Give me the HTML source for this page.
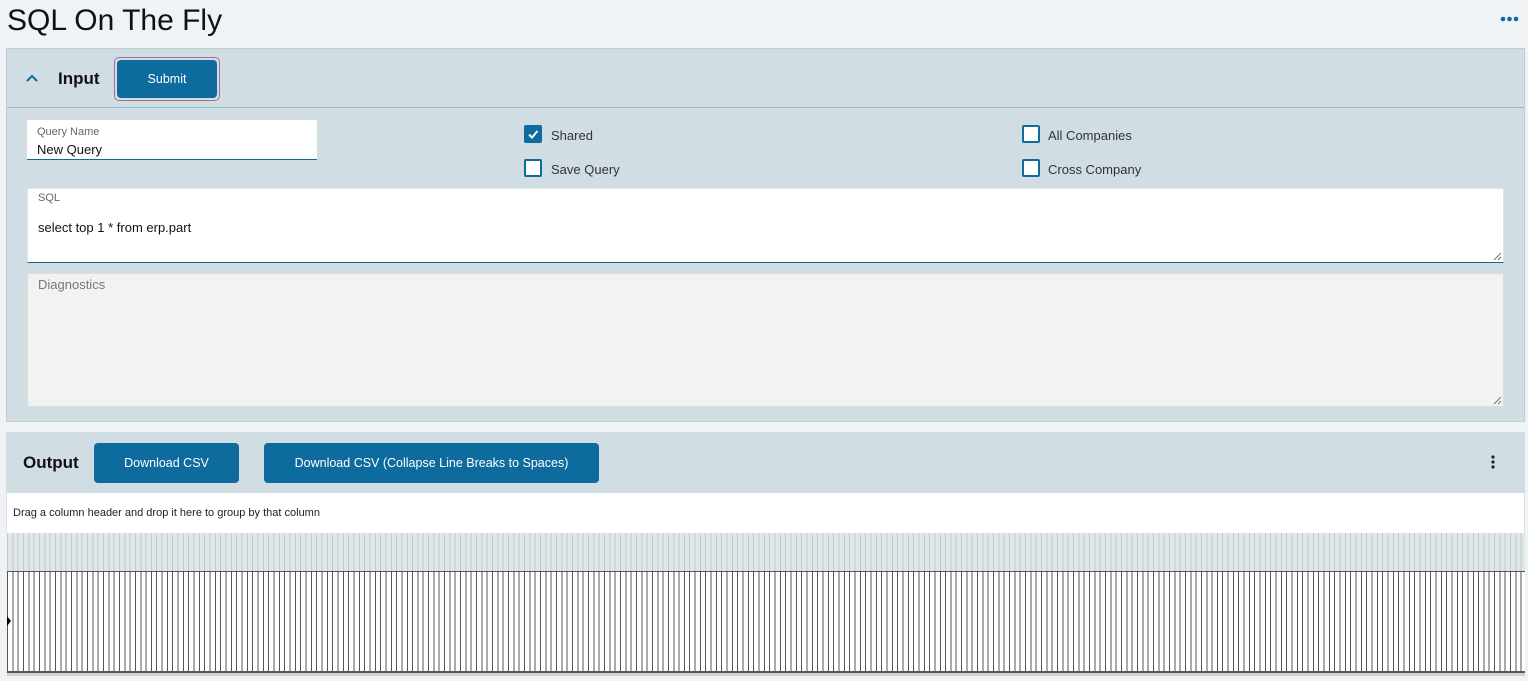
<!DOCTYPE html>
<html><head><meta charset="utf-8"><style>
*{box-sizing:border-box;margin:0;padding:0}
body{width:1528px;height:681px;background:#eff3f6;font-family:"Liberation Sans",sans-serif;position:relative;overflow:hidden;color:#222}
.a{position:absolute}
.btn{position:absolute;background:#0e6b9e;color:#fff;font-size:12.5px;border-radius:4px;display:flex;align-items:center;justify-content:center}
.cb{position:absolute;width:18px;height:18px;border:2px solid #0e6b9e;background:#fff;border-radius:2px}
.lbl{position:absolute;font-size:13px;color:#333}
</style></head><body>
<div class="a" style="left:7px;top:4px;font-size:30px;color:#111">SQL On The Fly</div>
<svg class="a" style="left:1500px;top:15px" width="20" height="8"><circle cx="3" cy="4" r="2.3" fill="#0e6b9e"/><circle cx="9.5" cy="4" r="2.3" fill="#0e6b9e"/><circle cx="16" cy="4" r="2.3" fill="#0e6b9e"/></svg>

<div class="a" style="left:6px;top:48px;width:1519px;height:374px;background:#d0dde2;border:1px solid #c4cccf"></div>
<div class="a" style="left:7px;top:107px;width:1517px;height:1px;background:#8fc0d0"></div>
<svg class="a" style="left:26px;top:74px" width="12" height="8"><path d="M1 7L6 2L11 7" stroke="#0e6b9e" stroke-width="2" fill="none"/></svg>
<div class="a" style="left:58px;top:69px;font-size:17px;font-weight:bold;color:#111">Input</div>
<div class="a" style="left:114px;top:57px;width:106px;height:44px;border:1px solid #b06a9a;border-radius:5px"></div>
<div class="btn" style="left:117px;top:60px;width:100px;height:38px">Submit</div>

<div class="a" style="left:27px;top:120px;width:290px;height:40px;background:#fff;border-bottom:1px solid #0e6b9e"></div>
<div class="a" style="left:37px;top:126px;font-size:11px;color:#666">Query Name</div>
<div class="a" style="left:37px;top:142px;font-size:13px;color:#111">New Query</div>

<div class="cb" style="left:524px;top:125px;background:#0e6b9e"><svg width="14" height="14" style="position:absolute;left:0;top:0"><path d="M3 7.5L6 10.5L11.5 4" stroke="#fff" stroke-width="2" fill="none"/></svg></div>
<div class="lbl" style="left:551px;top:128px">Shared</div>
<div class="cb" style="left:524px;top:159px"></div>
<div class="lbl" style="left:551px;top:162px">Save Query</div>
<div class="cb" style="left:1022px;top:125px"></div>
<div class="lbl" style="left:1048px;top:128px">All Companies</div>
<div class="cb" style="left:1022px;top:159px"></div>
<div class="lbl" style="left:1048px;top:162px">Cross Company</div>

<div class="a" style="left:27px;top:188px;width:1477px;height:75px;background:#fff;border:1px solid #dde3e6;border-bottom:1px solid #0e6b9e"></div>
<div class="a" style="left:38px;top:192px;font-size:11px;color:#666">SQL</div>
<div class="a" style="left:38px;top:220px;font-size:13px;color:#111">select top 1 * from erp.part</div>
<svg class="a" style="left:1493px;top:252px" width="9" height="9"><path d="M1 8L8 1M5 8L8 5" stroke="#777" stroke-width="1"/></svg>
<div class="a" style="left:27px;top:273px;width:1477px;height:134px;background:#f2f2f2;border:1px solid #dcdcdc"></div>
<div class="a" style="left:38px;top:277px;font-size:13px;color:#777">Diagnostics</div>
<svg class="a" style="left:1493px;top:396px" width="9" height="9"><path d="M1 8L8 1M5 8L8 5" stroke="#777" stroke-width="1"/></svg>

<div class="a" style="left:6px;top:432px;width:1519px;height:62px;background:#d0dde2;border-bottom:1px solid #8fc0d0"></div>
<div class="a" style="left:23px;top:453px;font-size:17px;font-weight:bold;color:#111">Output</div>
<div class="btn" style="left:94px;top:443px;width:145px;height:40px">Download CSV</div>
<div class="btn" style="left:264px;top:443px;width:335px;height:40px">Download CSV (Collapse Line Breaks to Spaces)</div>
<svg class="a" style="left:1490px;top:455px" width="6" height="16"><circle cx="3" cy="2" r="1.6" fill="#222"/><circle cx="3" cy="7" r="1.6" fill="#222"/><circle cx="3" cy="12" r="1.6" fill="#222"/></svg>
<div class="a" style="left:6px;top:493px;width:1519px;height:40px;background:#fff;border-left:1px solid #dde;border-right:1px solid #dde"></div>
<div class="a" style="left:13px;top:507px;font-size:11px;color:#222">Drag a column header and drop it here to group by that column</div>

<div class="a" style="left:7px;top:533px;width:1518px;height:38px;background:#dfe7ea repeating-linear-gradient(90deg,#c2c8cb 0 1px,transparent 1px 5.33px)"></div>
<div class="a" style="left:7px;top:571px;width:1518px;height:102px;background:#fff repeating-linear-gradient(90deg,#555 0 1px,transparent 1px 5.33px);border-top:1px solid #555;border-bottom:2px solid #555"></div>
<svg class="a" style="left:7px;top:616px" width="5" height="10"><path d="M0 0L4 5L0 10Z" fill="#000"/></svg>
<div class="a" style="left:7px;top:673px;width:1518px;height:3px;background:#d0d4d6"></div>
</body></html>
